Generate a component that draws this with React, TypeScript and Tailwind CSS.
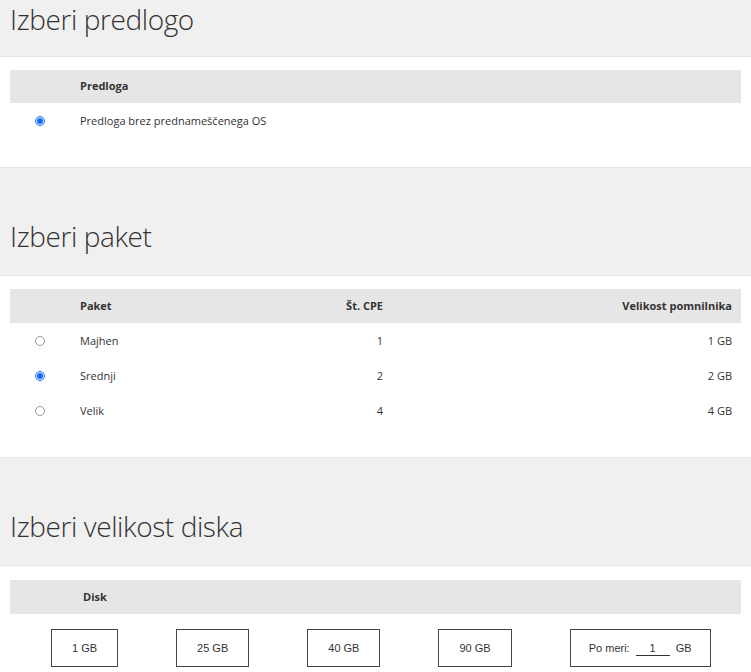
import React from "react";

function Radio({ checked }: { checked?: boolean }) {
  if (checked) {
    return (
      <span className="inline-flex h-[10px] w-[10px] items-center justify-center rounded-full border border-[#2a7cf6] bg-[#cfe2ff]">
        <span className="h-[6px] w-[6px] rounded-full bg-[#1a6ff0]" />
      </span>
    );
  }
  return <span className="inline-block h-[10px] w-[10px] rounded-full border border-[#9a9a9a] bg-white" />;
}

function Header({ title, first }: { title: string; first?: boolean }) {
  return (
    <div
      className={
        "border-b border-[#e6e6e6] bg-[#f0f0f0] px-[10px] " +
        (first ? "pt-[1px] pb-[19px]" : "pt-[50px] pb-[21px]")
      }
    >
      <h2 className="text-[28px] font-light leading-[36px] text-[#333] tracking-[-0.4px]">{title}</h2>
    </div>
  );
}

const packets = [
  { name: "Majhen", cpu: "1", mem: "1 GB" },
  { name: "Srednji", cpu: "2", mem: "2 GB", checked: true },
  { name: "Velik", cpu: "4", mem: "4 GB" },
];

const disks = ["1 GB", "25 GB", "40 GB", "90 GB"];

export default function App() {
  return (
    <div className="min-h-screen bg-white font-['Open_Sans',sans-serif] text-[#333]">
      <Header title="Izberi predlogo" first />
      <div className="border-b border-[#e6e6e6] px-[10px] pt-[13px] pb-[29px]">
        <div className="grid h-[33px] grid-cols-[60px_1fr] items-center bg-[#e6e6e6] text-[11px] font-bold">
          <div />
          <div className="pl-[10px]">Predloga</div>
        </div>
        <div className="grid h-[35px] grid-cols-[60px_1fr] items-center pt-[1px] text-[11px]">
          <div className="flex justify-center">
            <Radio checked />
          </div>
          <div className="pl-[10px]">Predloga brez prednameščenega OS</div>
        </div>
      </div>

      <Header title="Izberi paket" />
      <div className="border-b border-[#e6e6e6] px-[10px] pt-[13px] pb-[29px]">
        <div className="grid h-[34px] grid-cols-[60px_200px_123px_1fr] items-center bg-[#e6e6e6] text-[11px] font-bold">
          <div />
          <div className="pl-[10px]">Paket</div>
          <div className="pr-[10px] text-right">Št. CPE</div>
          <div className="pr-[9px] text-right">Velikost pomnilnika</div>
        </div>
        {packets.map((p) => (
          <div
            key={p.name}
            className="grid h-[35px] grid-cols-[60px_200px_123px_1fr] items-center pt-[1px] text-[11px]"
          >
            <div className="flex justify-center">
              <Radio checked={p.checked} />
            </div>
            <div className="pl-[10px]">{p.name}</div>
            <div className="pr-[10px] text-right">{p.cpu}</div>
            <div className="pr-[9px] text-right">{p.mem}</div>
          </div>
        ))}
      </div>

      <Header title="Izberi velikost diska" />
      <div className="px-[10px] pt-[14px] pb-[20px]">
        <div className="flex h-[34px] items-center bg-[#e6e6e6] pl-[73px] text-[11px] font-bold">Disk</div>
        <div className="mt-[15px] flex gap-[58px] pl-[41px] font-['Liberation_Sans',sans-serif] text-[11px] text-[#333]">
          {disks.map((d) => (
            <div
              key={d}
              className="flex h-[38px] items-center justify-center border border-[#444] px-[20px]"
            >
              {d}
            </div>
          ))}
          <div className="flex h-[38px] w-[141px] items-center justify-center border border-[#444]">
            <span>Po meri:</span>
            <span className="ml-[6px] inline-block w-[34px] border-b border-[#333] text-center leading-[14px]">1</span>
            <span className="ml-[6px]">GB</span>
          </div>
        </div>
      </div>
    </div>
  );
}
